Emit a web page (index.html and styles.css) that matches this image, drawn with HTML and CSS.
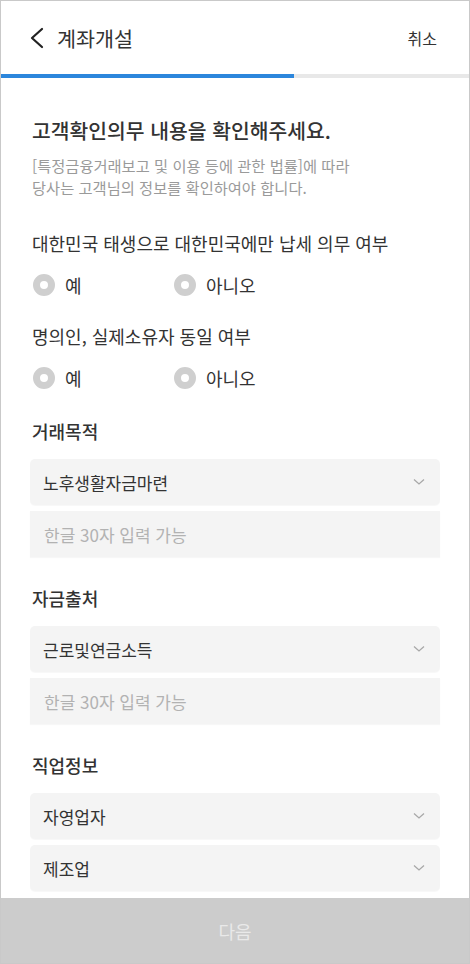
FILE: index.html
```html
<!DOCTYPE html>
<html lang="ko">
<head>
<meta charset="utf-8">
<title>계좌개설</title>
<link rel="stylesheet" href="styles.css">
</head>
<body>
<div class="screen">
  <header class="header">
    <div class="header-left">
      <svg class="back" width="16" height="22" viewBox="0 0 16 22"><path d="M13 2 L3 11 L13 20" fill="none" stroke="#222" stroke-width="2.2" stroke-linecap="round" stroke-linejoin="round"/></svg>
      <span class="title">계좌개설</span>
    </div>
    <span class="cancel">취소</span>
  </header>
  <div class="progress"><div class="progress-fill" style="width:293px"></div></div>
  <main class="main">
    <h1 class="heading">고객확인의무 내용을 확인해주세요.</h1>
    <p class="sub">[특정금융거래보고 및 이용 등에 관한 법률]에 따라<br>당사는 고객님의 정보를 확인하여야 합니다.</p>

    <div class="question first">대한민국 태생으로 대한민국에만 납세 의무 여부</div>
    <div class="radios">
      <div class="radio"><span class="dot"></span><span class="radio-label">예</span></div>
      <div class="radio"><span class="dot"></span><span class="radio-label">아니오</span></div>
    </div>

    <div class="question">명의인, 실제소유자 동일 여부</div>
    <div class="radios">
      <div class="radio"><span class="dot"></span><span class="radio-label">예</span></div>
      <div class="radio"><span class="dot"></span><span class="radio-label">아니오</span></div>
    </div>

    <div class="section-label">거래목적</div>
    <div class="fields">
      <div class="field select"><span>노후생활자금마련</span><svg class="chev" width="12" height="8" viewBox="0 0 12 8"><path d="M1 1.5 L6 6 L11 1.5" fill="none" stroke="#a8a8a8" stroke-width="1.3"/></svg></div>
      <div class="field input"><span>한글 30자 입력 가능</span></div>
    </div>

    <div class="section-label">자금출처</div>
    <div class="fields">
      <div class="field select"><span>근로및연금소득</span><svg class="chev" width="12" height="8" viewBox="0 0 12 8"><path d="M1 1.5 L6 6 L11 1.5" fill="none" stroke="#a8a8a8" stroke-width="1.3"/></svg></div>
      <div class="field input"><span>한글 30자 입력 가능</span></div>
    </div>

    <div class="section-label">직업정보</div>
    <div class="fields">
      <div class="field select"><span>자영업자</span><svg class="chev" width="12" height="8" viewBox="0 0 12 8"><path d="M1 1.5 L6 6 L11 1.5" fill="none" stroke="#a8a8a8" stroke-width="1.3"/></svg></div>
      <div class="field select"><span>제조업</span><svg class="chev" width="12" height="8" viewBox="0 0 12 8"><path d="M1 1.5 L6 6 L11 1.5" fill="none" stroke="#a8a8a8" stroke-width="1.3"/></svg></div>
    </div>
  </main>
  <button class="next">다음</button>
</div>
</body>
</html>
```
FILE: styles.css
```css
* { box-sizing: border-box; }
html, body { margin: 0; padding: 0; background: #fff; }
body {
  font-family: "Noto Sans CJK KR", "Noto Sans", sans-serif;
  color: #333;
}
.screen {
  width: 470px;
  height: 964px;
  border: 1px solid #c9c9c9;
  display: flex;
  flex-direction: column;
  overflow: hidden;
  background: #fff;
}
.header {
  height: 73px;
  flex: none;
  display: flex;
  align-items: center;
  justify-content: space-between;
  padding: 0 32px 0 28px;
}
.header-left { display: flex; align-items: center; }
.back { display: block; margin-right: 12px; }
.title { font-size: 20.7px; color: #333; line-height: 26px; }
.cancel { font-size: 16px; color: #333; line-height: 22px; }
.progress { height: 4px; flex: none; background: #e8e8e8; }
.progress-fill { height: 100%; background: #2c86dc; }
.main {
  flex: 1;
  overflow: hidden;
  padding: 0 29px;
}
.heading {
  margin: 38px 0 0 2px;
  font-size: 20.4px;
  font-weight: 500;
  line-height: 28px;
  color: #333;
}
.sub {
  margin: 10px 0 0 2px;
  font-size: 15.3px;
  line-height: 22px;
  color: #9a9a9a;
}
.question {
  margin: 27px 0 0 2px;
  font-size: 18px;
  line-height: 24px;
  color: #333;
}
.question.first { margin-top: 33px; }
.radios {
  display: flex;
  margin-top: 18px;
  padding-left: 3px;
}
.radio {
  width: 141px;
  display: flex;
  align-items: center;
  height: 24px;
}
.dot {
  width: 22px;
  height: 22px;
  border-radius: 50%;
  border: 7px solid #cfcfcf;
  background: #fff;
  flex: none;
}
.radio-label {
  margin-left: 10px;
  font-size: 18px;
  line-height: 24px;
  color: #333;
}
.section-label {
  margin: 29px 0 0 2px;
  font-size: 18px;
  font-weight: 500;
  line-height: 24px;
  color: #333;
}
.fields {
  display: flex;
  flex-direction: column;
  gap: 6px;
  margin-top: 16px;
}
.field {
  height: 46px;
  border-radius: 5px;
  background: #f4f4f4;
  display: flex;
  align-items: center;
  justify-content: space-between;
  padding: 0 15px 0 13px;
  font-size: 17px;
  box-shadow: 0 1px 1px rgba(0,0,0,0.03);
}
.field.select span { color: #333; }
.field.input { border-radius: 0; }
.field.input span { color: #b2b2b2; margin-left: 1px; }
.chev { display: block; }
.next {
  height: 65px;
  flex: none;
  border: 0;
  margin: 0;
  background: #cccccc;
  color: #e9e9e9;
  font-family: "Noto Sans CJK KR", "Noto Sans", sans-serif;
  font-size: 18px;
  width: 100%;
}
```
